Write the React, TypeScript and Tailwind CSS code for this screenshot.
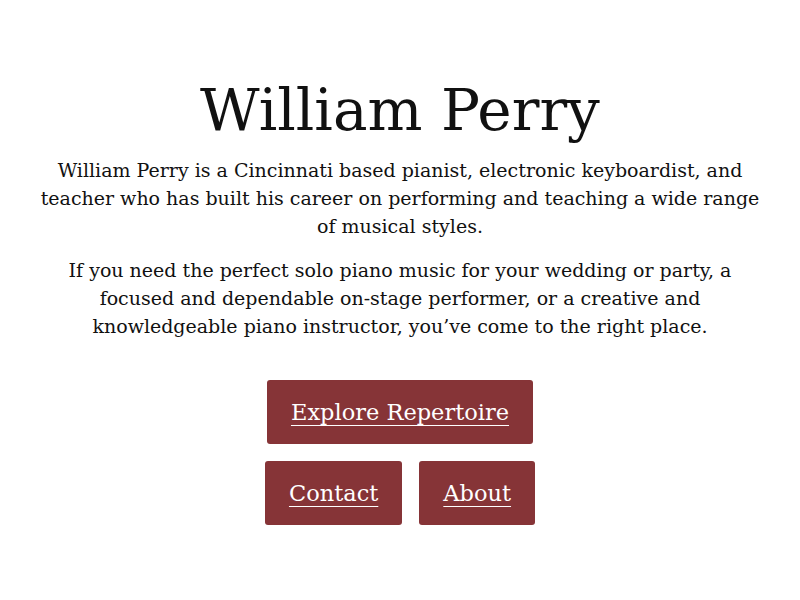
import React from 'react';

const serif = { fontFamily: '"DejaVu Serif", "Liberation Serif", serif' };

const LinkButton: React.FC<{ label: string }> = ({ label }) => (
  <a
    href="#"
    className="inline-block rounded-[3px] bg-[#863437] px-6 py-[15px] text-[22.5px] leading-[34px] text-white underline underline-offset-[5px] decoration-1"
  >
    {label}
  </a>
);

export default function App() {
  return (
    <div
      className="flex min-h-screen flex-col items-center justify-center bg-white px-10 pt-[3px] text-center text-[#111]"
      style={serif}
    >
      <h1 className="text-[58px] leading-[64px] text-[#111]">William Perry</h1>
      <p className="mt-[14px] max-w-[720px] text-[19px] leading-[28px]">
        William Perry is a Cincinnati based pianist, electronic keyboardist, and teacher who has built his
        career on performing and teaching a wide range of musical styles.
      </p>
      <p className="mt-4 max-w-[720px] text-[19px] leading-[28px]">
        If you need the perfect solo piano music for your wedding or party, a focused and dependable
        on-stage performer, or a creative and knowledgeable piano instructor, you’ve come to the right place.
      </p>
      <div className="mt-10 flex flex-col items-center gap-[17px]">
        <LinkButton label="Explore Repertoire" />
        <div className="flex gap-[17px]">
          <LinkButton label="Contact" />
          <LinkButton label="About" />
        </div>
      </div>
    </div>
  );
}
